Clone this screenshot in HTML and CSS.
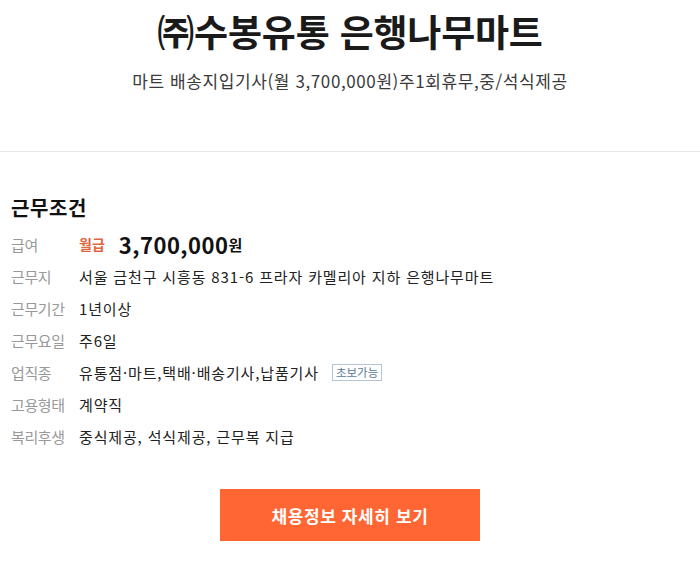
FILE: index.html
```html
<!DOCTYPE html>
<html lang="ko">
<head>
<meta charset="utf-8">
<link rel="stylesheet" href="styles.css">
</head>
<body>
<header class="head">
  <h1 class="title">㈜수봉유통 은행나무마트</h1>
  <p class="subtitle">마트 배송지입기사(월 3,700,000원)주1회휴무,중/석식제공</p>
</header>
<section class="cond">
  <h2 class="cond-title">근무조건</h2>
  <dl class="rows">
    <div class="row"><dt>급여</dt><dd><span class="pay-type">월급</span><strong class="pay">3,700,000</strong><span class="won">원</span></dd></div>
    <div class="row"><dt>근무지</dt><dd>서울 금천구 시흥동 831-6 프라자 카멜리아 지하 은행나무마트</dd></div>
    <div class="row"><dt>근무기간</dt><dd>1년이상</dd></div>
    <div class="row"><dt>근무요일</dt><dd>주6일</dd></div>
    <div class="row"><dt>업직종</dt><dd>유통점·마트,택배·배송기사,납품기사<span class="tag">초보가능</span></dd></div>
    <div class="row"><dt>고용형태</dt><dd>계약직</dd></div>
    <div class="row"><dt>복리후생</dt><dd>중식제공, 석식제공, 근무복 지급</dd></div>
  </dl>
  <div class="actions"><a class="btn" href="#">채용정보 자세히 보기</a></div>
</section>
</body>
</html>
```
FILE: styles.css
```css
* { box-sizing: border-box; }
html, body { margin: 0; padding: 0; background: #fff; }
body {
  font-family: "Noto Sans CJK KR", "Noto Sans", sans-serif;
  color: #222;
  width: 700px;
}
.head {
  text-align: center;
  padding-top: 7px;
  height: 152px;
  border-bottom: 1px solid #e8e8e8;
}
.title {
  margin: 0;
  font-size: 37px;
  font-weight: 700;
  line-height: 48px;
  color: #1a1a1a;
  letter-spacing: -0.2px;
}
.subtitle {
  margin: 14px 0 0;
  font-size: 17px;
  line-height: 24px;
  color: #3a3a3a;
  letter-spacing: 0.6px;
}
.cond { padding: 42px 11px 0; }
.cond-title {
  margin: 0;
  font-size: 20px;
  font-weight: 700;
  line-height: 28px;
  color: #111;
  letter-spacing: 0.6px;
}
.rows { margin: 6px 0 0; }
.row {
  display: flex;
  align-items: center;
  height: 32px;
  font-size: 15px;
}
.row dt {
  width: 68px;
  flex: none;
  color: #999;
  font-size: 15px;
  letter-spacing: -0.4px;
}
.row dd {
  margin: 0;
  color: #222;
  display: flex;
  align-items: center;
  letter-spacing: 0.85px;
}
.pay-type { color: #e0663f; font-weight: 700; font-size: 14px; margin-right: 14px; letter-spacing: 0; }
.pay { font-size: 22px; font-weight: 700; color: #111; letter-spacing: 0.5px; }
.won { font-size: 15px; font-weight: 700; color: #111; margin-left: 0; letter-spacing: 0; }
.tag {
  margin-left: 13px;
  font-size: 11.5px;
  line-height: 15px;
  padding: 0 3px;
  border: 1px solid #b4c4d4;
  color: #5a7a98;
  letter-spacing: 0;
}
.actions { display: flex; justify-content: center; margin-top: 37px; }
.btn {
  display: flex;
  align-items: center;
  justify-content: center;
  width: 260px;
  height: 52px;
  background: #ff6633;
  color: #fff;
  font-size: 17px;
  font-weight: 700;
  text-decoration: none;
  letter-spacing: 0.6px;
}
```
